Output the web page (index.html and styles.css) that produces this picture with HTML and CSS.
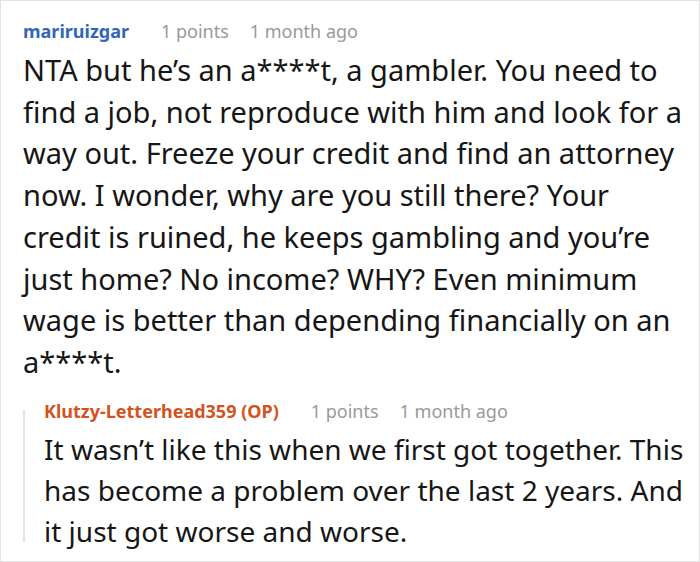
FILE: index.html
```html
<!DOCTYPE html>
<html>
<head>
<meta charset="utf-8">
<link rel="stylesheet" href="styles.css">
</head>
<body>
<div class="frame">
  <div class="comment">
    <div class="meta">
      <span class="user">mariruizgar</span>
      <span class="info">1 points</span>
      <span class="info">1 month ago</span>
    </div>
    <p class="text">NTA but he’s an a****t, a gambler. You need to find a job, not reproduce with him and look for a way out. Freeze your credit and find an attorney now. I wonder, why are you still there? Your credit is ruined, he keeps gambling and you’re just home? No income? WHY? Even minimum wage is better than depending financially on an a****t.</p>
    <div class="reply">
      <div class="meta">
        <span class="user op">Klutzy-Letterhead359 (OP)</span>
        <span class="info">1 points</span>
        <span class="info">1 month ago</span>
      </div>
      <p class="text">It wasn’t like this when we first got together. This has become a problem over the last 2 years. And it just got worse and worse.</p>
    </div>
  </div>
</div>
</body>
</html>
```
FILE: styles.css
```css
html, body {
  margin: 0;
  padding: 0;
  background: #fff;
}
.frame {
  width: 700px;
  height: 562px;
  box-sizing: border-box;
  border: 1px solid #e2e2e2;
  overflow: hidden;
  font-family: "Noto Sans", "Open Sans", sans-serif;
}
.comment {
  padding: 17px 12px 0 22px;
}
.meta {
  display: flex;
  align-items: baseline;
  gap: 21px;
  font-size: 18px;
  line-height: 26px;
}
.user {
  font-weight: 700;
  color: #3266b8;
  margin-right: 11px;
}
.user.op {
  color: #d4521c;
}
.info {
  color: #999;
}
.text {
  margin: 5px 0 0;
  font-size: 29px;
  line-height: 41.7px;
  color: #161616;
}
.reply {
  position: relative;
  margin-top: 15px;
  padding-left: 21px;
}
.reply::before {
  content: "";
  position: absolute;
  left: 0;
  top: 12px;
  bottom: 10px;
  width: 2px;
  background: #e4e4e4;
}
.reply .text {
  margin-top: 5.5px;
  font-size: 28px;
  line-height: 41px;
}
```
